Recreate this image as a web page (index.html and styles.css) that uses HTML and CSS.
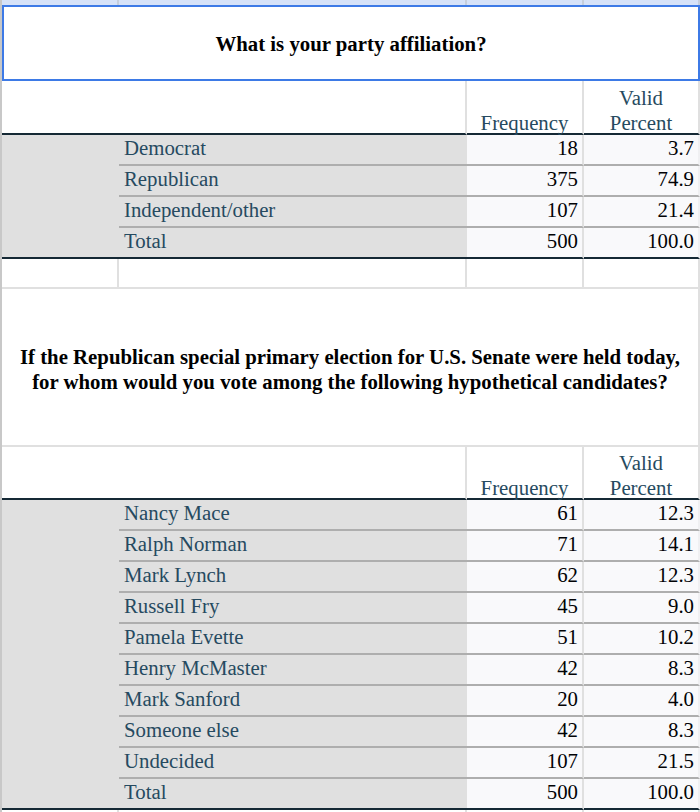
FILE: index.html
```html
<!DOCTYPE html>
<html>
<head>
<meta charset="utf-8">
<link rel="stylesheet" href="styles.css">
</head>
<body>
<div class="sheet">
  <div class="grid">
    <div class="strip"></div><div class="strip"></div><div class="strip"></div><div class="strip"></div>

    <div class="title-box">What is your party affiliation?</div>

    <div class="h-blank h1"></div>
    <div class="h-freq h1">Frequency</div>
    <div class="h-pct h1">Valid<br>Percent</div>

    <div class="stub s4"></div>
    <div class="lbl">Democrat</div><div class="num c3">18</div><div class="num c4">3.7</div>
    <div class="lbl">Republican</div><div class="num c3">375</div><div class="num c4">74.9</div>
    <div class="lbl">Independent/other</div><div class="num c3">107</div><div class="num c4">21.4</div>
    <div class="lbl last">Total</div><div class="num c3 last">500</div><div class="num c4 last">100.0</div>

    <div class="empty"></div><div class="empty"></div><div class="empty"></div><div class="empty"></div>

    <div class="title2">If the Republican special primary election for U.S. Senate were held today,<br>for whom would you vote among the following hypothetical candidates?</div>

    <div class="h-blank h2"></div>
    <div class="h-freq h2">Frequency</div>
    <div class="h-pct h2">Valid<br>Percent</div>

    <div class="stub s10"></div>
    <div class="lbl">Nancy Mace</div><div class="num c3">61</div><div class="num c4">12.3</div>
    <div class="lbl">Ralph Norman</div><div class="num c3">71</div><div class="num c4">14.1</div>
    <div class="lbl">Mark Lynch</div><div class="num c3">62</div><div class="num c4">12.3</div>
    <div class="lbl">Russell Fry</div><div class="num c3">45</div><div class="num c4">9.0</div>
    <div class="lbl">Pamela Evette</div><div class="num c3">51</div><div class="num c4">10.2</div>
    <div class="lbl">Henry McMaster</div><div class="num c3">42</div><div class="num c4">8.3</div>
    <div class="lbl">Mark Sanford</div><div class="num c3">20</div><div class="num c4">4.0</div>
    <div class="lbl">Someone else</div><div class="num c3">42</div><div class="num c4">8.3</div>
    <div class="lbl">Undecided</div><div class="num c3">107</div><div class="num c4">21.5</div>
    <div class="lbl last">Total</div><div class="num c3 last">500</div><div class="num c4 last">100.0</div>

    <div class="empty"></div><div class="empty"></div><div class="empty"></div><div class="empty"></div>
  </div>
</div>
</body>
</html>
```

FILE: styles.css
```css
html, body {
  margin: 0;
  padding: 0;
  background: #ffffff;
}

body {
  font-family: "Liberation Serif", "Times New Roman", serif;
  font-size: 20.8px;
  color: #000000;
}

.sheet {
  width: 698px;
  min-height: 812px;
  border-left: 2px solid #c8c8c8;
}

.grid {
  display: grid;
  grid-template-columns: 117px 348px 117px 116px;
}

.grid > div {
  box-sizing: border-box;
}

.strip {
  height: 5px;
  background: #d6e2f8;
  border-right: 2px solid #c5cedc;
}

.title-box {
  grid-column: 1 / -1;
  height: 76px;
  border: 2px solid #3d7ae6;
  padding-top: 24px;
  line-height: 25px;
  font-weight: bold;
  text-align: center;
  color: #000000;
}

.h-blank,
.h-freq,
.h-pct {
  border-bottom: 2px solid #152935;
  border-right: 2px solid #e0e0e0;
  color: #264a60;
  text-align: center;
  line-height: 25px;
  background: #ffffff;
}

.h-blank {
  grid-column: span 2;
}

.h1 {
  height: 54px;
  padding-top: 4px;
}

.h2 {
  height: 53px;
  padding-top: 3px;
}

.h-freq.h1 {
  padding-top: 29px;
}

.h-freq.h2 {
  padding-top: 28px;
}

.stub {
  background: #e0e0e0;
  border-bottom: 2px solid #152935;
}

.s4 {
  grid-row: span 4;
}

.s10 {
  grid-row: span 10;
}

.lbl {
  height: 31px;
  background: #e0e0e0;
  border-bottom: 2px solid #aeaeae;
  padding-left: 5px;
  line-height: 26px;
  color: #264a60;
  white-space: nowrap;
}

.num {
  height: 31px;
  background: #f9f9fb;
  border-bottom: 2px solid #aeaeae;
  border-right: 2px solid #e0e0e0;
  padding-right: 4px;
  line-height: 26px;
  text-align: right;
  color: #010205;
}

.c4 {
  border-right-color: #f0f0f2;
}

.lbl.last,
.num.last {
  border-bottom-color: #152935;
}

.empty {
  height: 30px;
  border-right: 2px solid #e0e0e0;
  border-bottom: 2px solid #e0e0e0;
}

.title2 {
  grid-column: 1 / -1;
  height: 158px;
  padding-top: 55px;
  line-height: 25px;
  font-weight: bold;
  text-align: center;
  border-right: 2px solid #e0e0e0;
  border-bottom: 2px solid #e0e0e0;
  color: #000000;
}
```
